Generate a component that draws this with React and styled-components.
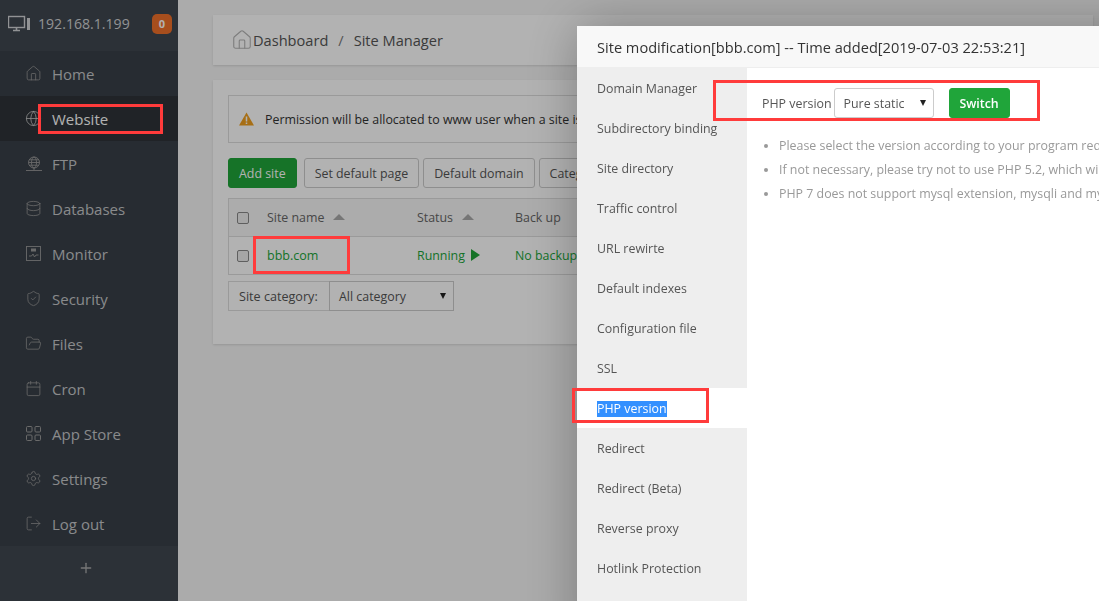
import React from "react";
import styled, { createGlobalStyle } from "styled-components";
import {
  Database,
  FolderOpen,
  Globe,
  House,
  Calendar,
  LogOut,
  Settings,
  ShieldCheck,
  Plus,
} from "lucide-react";

const GlobalStyle = createGlobalStyle`
  html, body {
    margin: 0;
    height: 100%;
    overflow: hidden;
    background: #f5f5f5;
    font-family: "Open Sans", "Liberation Sans", sans-serif;
  }
  * { box-sizing: border-box; }
`;

const Page = styled.div`
  display: flex;
  width: 1099px;
  height: 601px;
  overflow: hidden;
`;

const Sidebar = styled.aside`
  display: flex;
  flex-direction: column;
  flex: 0 0 178px;
  background: #394048;
`;

const ServerBar = styled.div`
  display: flex;
  align-items: center;
  height: 52px;
  padding: 0 6px 4px 8px;
  background: #404750;
  color: #d0d2d4;
  font-size: 14.1px;
  white-space: nowrap;
`;

const ServerIp = styled.span`
  margin-left: 6px;
  flex: 1;
`;

const Badge = styled.span`
  display: flex;
  align-items: center;
  justify-content: center;
  width: 20px;
  height: 20px;
  border-radius: 5px;
  background: #f0702a;
  color: #fff;
  font-size: 11px;
  font-weight: 700;
`;

const Nav = styled.nav`
  display: flex;
  flex-direction: column;
  flex: 1;
`;

const NavItem = styled.div`
  display: flex;
  align-items: center;
  gap: 11px;
  height: 45px;
  padding-left: 26px;
  background: ${(p) => (p.$active ? "#2e3338" : "transparent")};
  color: ${(p) => (p.$active ? "#fff" : "#c4c6c8")};
  font-size: 15px;
  font-weight: ${(p) => (p.$active ? 500 : 400)};
`;

const IconSlot = styled.span`
  display: flex;
  align-items: center;
  justify-content: center;
  flex: 0 0 15px;
  min-width: 0;
  width: 15px;
  height: 17px;
  color: ${(p) => (p.$active ? "#ccc" : "#999")};

  svg {
    flex: none;
  }
`;

const AddBar = styled.div`
  display: flex;
  align-items: center;
  justify-content: center;
  height: 55px;
  padding: 0 7px 12px 0;
  background: #404750;
  color: #aaa;
`;

const Main = styled.main`
  flex: 1;
  min-width: 0;
  padding: 15px 0 0 35px;
`;

const Card = styled.section`
  background: #fff;
  box-shadow: 0 1px 2px rgba(0, 0, 0, 0.12);
  width: 880px;
`;

const Crumbs = styled(Card)`
  display: flex;
  align-items: center;
  height: 50px;
  padding-left: 18px;
  margin-bottom: 15px;
  color: #555;
  font-size: 14.6px;
  white-space: nowrap;

  svg {
    color: #b4b4b4;
  }
`;

const CrumbSep = styled.span`
  margin: 0 10px;
  color: #777;
`;

const Panel = styled(Card)`
  height: 264px;
  padding: 15px;
`;

const Alert = styled.div`
  display: flex;
  align-items: center;
  gap: 11px;
  height: 48px;
  padding-left: 10px;
  border: 1px solid #ddd;
  color: #333;
  font-size: 12.4px;
  white-space: nowrap;
`;

const Toolbar = styled.div`
  display: flex;
  gap: 4px;
  margin-top: 15px;
`;

const Button = styled.button`
  height: 30px;
  padding: 0 10px;
  border: 1px solid ${(p) => (p.$primary ? "#20a53a" : "#ccc")};
  border-radius: 3px;
  background: ${(p) => (p.$primary ? "#20a53a" : "#fff")};
  color: ${(p) => (p.$primary ? "#fff" : "#555")};
  font-family: inherit;
  font-size: 12.4px;
  white-space: nowrap;
  margin-right: ${(p) => (p.$primary ? "3px" : "0")};
`;

const Table = styled.div`
  margin-top: 10px;
  border: 1px solid #ddd;
  font-size: 12.4px;
  color: #666;
`;

const Row = styled.div`
  display: grid;
  grid-template-columns: 38px 150px 98px 1fr;
  align-items: center;
  height: ${(p) => (p.$head ? "37px" : "38px")};
  background: ${(p) => (p.$head ? "#f6f6f6" : "#fff")};
  border-top: ${(p) => (p.$head ? "none" : "1px solid #ddd")};
  white-space: nowrap;
`;

const Check = styled.span`
  display: block;
  width: 12px;
  height: 12px;
  margin-left: 8px;
  border: 1px solid #888;
  border-radius: 2px;
  background: #eee;
`;

const Caret = styled.span`
  display: inline-block;
  width: 0;
  height: 0;
  margin-left: 9px;
  border-left: 6px solid transparent;
  border-right: 6px solid transparent;
  border-bottom: 6px solid #aaa;
  vertical-align: 2px;
`;

const GreenText = styled.span`
  color: #20a53a;
`;

const LinkText = styled.span`
  color: #20a53a;
  font-size: 12.5px;
`;

const PlayIcon = styled.span`
  display: inline-block;
  width: 0;
  height: 0;
  margin-left: 6px;
  border-top: 6px solid transparent;
  border-bottom: 6px solid transparent;
  border-left: 9px solid #20a53a;
  vertical-align: -1px;
`;

const Filter = styled.div`
  display: flex;
  width: 226px;
  height: 30px;
  margin-top: 6px;
  font-size: 12.6px;
  color: #555;
  white-space: nowrap;
`;

const FilterLabel = styled.span`
  display: flex;
  align-items: center;
  flex: 0 0 101px;
  padding-left: 10px;
  border: 1px solid #ddd;
  border-right: none;
`;

const FakeSelect = styled.div`
  position: relative;
  display: flex;
  align-items: center;
  width: ${(p) => p.$width};
  height: 30px;
  padding-left: 9px;
  border: 1px solid #ccc;
  border-radius: ${(p) => (p.$round ? "3px" : "0")};
  background: #fff;
  color: #555;
  font-size: 12.4px;

  &::after {
    content: "";
    position: absolute;
    right: 7px;
    top: 11px;
    border-left: 3.5px solid transparent;
    border-right: 3.5px solid transparent;
    border-top: 6px solid #222;
  }
`;

const Overlay = styled.div`
  position: fixed;
  inset: 0;
  background: rgba(0, 0, 0, 0.3);
`;

const Modal = styled.div`
  position: fixed;
  left: 577px;
  top: 26px;
  width: 760px;
  height: 620px;
  display: flex;
  flex-direction: column;
  background: #fff;
  box-shadow: 1px 1px 50px rgba(0, 0, 0, 0.3);
`;

const ModalTitle = styled.div`
  display: flex;
  align-items: center;
  flex: 0 0 42px;
  padding-left: 20px;
  background: #f8f8f8;
  border-bottom: 1px solid #eee;
  color: #333;
  font-size: 14.6px;
  white-space: nowrap;
`;

const ModalBody = styled.div`
  display: flex;
  flex: 1;
`;

const Tabs = styled.div`
  flex: 0 0 170px;
  background: #eee;
`;

const Tab = styled.div`
  display: flex;
  align-items: center;
  height: 40px;
  padding-left: 20px;
  background: ${(p) => (p.$active ? "#fff" : "transparent")};
  color: #555;
  font-size: 12.4px;
  white-space: nowrap;
`;

const Selected = styled.span`
  background: #3390ff;
  color: #fff;
  line-height: 16px;
  margin-top: 1px;
`;

const Content = styled.div`
  flex: 1;
  padding: 20px 15px;
`;

const VersionRow = styled.div`
  display: flex;
  align-items: center;
  height: 30px;
  color: #555;
  font-size: 12.4px;
  white-space: nowrap;
`;

const VersionLabel = styled.span`
  margin-right: 2px;
`;

const SwitchButton = styled(Button)`
  margin-left: 15px;
  padding: 0;
  width: 61px;
  font-weight: 600;
`;

const Tips = styled.ul`
  margin: 16px 0 0;
  padding-left: 17px;
  color: #999;
  font-size: 12.4px;
  white-space: nowrap;

  li {
    height: 24px;
    line-height: 24px;
  }
`;

const Mark = styled.div`
  position: fixed;
  left: ${(p) => p.$x}px;
  top: ${(p) => p.$y}px;
  width: ${(p) => p.$w}px;
  height: ${(p) => p.$h}px;
  border: 3px solid #ff3b3b;
`;

const ServerIcon = () => (
  <svg width="24" height="18" viewBox="0 0 24 18" fill="none" stroke="currentColor">
    <rect x="0.5" y="1.5" width="16" height="11" strokeWidth="1.4" />
    <path d="M5 15.5h7M8.5 13v2" strokeWidth="1.6" />
    <rect x="19" y="3" width="3" height="12" fill="currentColor" stroke="none" />
  </svg>
);

const NetworkIcon = () => (
  <svg width="16" height="16" viewBox="0 0 16 16" fill="none" stroke="currentColor" strokeWidth="0.9">
    <circle cx="8" cy="6.5" r="5.5" />
    <ellipse cx="8" cy="6.5" rx="2.5" ry="5.5" />
    <path d="M2.5 6.5h11M3.3 3.8h9.4M3.3 9.2h9.4M8 12v2M0 14.5h16" />
  </svg>
);

const ChartIcon = () => (
  <svg width="15" height="15" viewBox="0 0 15 15" fill="none" stroke="currentColor" strokeWidth="0.9">
    <rect x="0.5" y="0.5" width="14" height="14" />
    <path d="M3 10h2.5l1.5-2 1.5 3 1.5-2h2.5" />
    <rect x="5" y="2.5" width="5" height="3" fill="currentColor" stroke="none" />
  </svg>
);

const AppsIcon = () => (
  <svg width="15" height="15" viewBox="0 0 15 15" fill="none" stroke="currentColor" strokeWidth="1">
    <rect x="0.5" y="0.5" width="5.5" height="5.5" rx="1" />
    <rect x="9" y="0.5" width="5.5" height="5.5" rx="1" />
    <rect x="0.5" y="9" width="5.5" height="5.5" rx="1" />
    <rect x="9" y="9" width="5.5" height="5.5" rx="1" />
  </svg>
);

const WarnIcon = () => (
  <svg width="15" height="14" viewBox="0 0 15 14">
    <path d="M7.5 0.5 15 13.5H0Z" fill="#f0a020" />
    <path d="M7.5 4.5v5M7.5 10.5v1.6" stroke="#fff" strokeWidth="1.5" />
  </svg>
);

const navItems = [
  { label: "Home", icon: <House size={17} strokeWidth={1.1} /> },
  { label: "Website", icon: <Globe size={17} strokeWidth={1.1} />, active: true },
  { label: "FTP", icon: <NetworkIcon /> },
  { label: "Databases", icon: <Database size={17} strokeWidth={1.1} /> },
  { label: "Monitor", icon: <ChartIcon /> },
  { label: "Security", icon: <ShieldCheck size={17} strokeWidth={1.1} /> },
  { label: "Files", icon: <FolderOpen size={17} strokeWidth={1.1} /> },
  { label: "Cron", icon: <Calendar size={17} strokeWidth={1.1} /> },
  { label: "App Store", icon: <AppsIcon /> },
  { label: "Settings", icon: <Settings size={17} strokeWidth={1.1} /> },
  { label: "Log out", icon: <LogOut size={17} strokeWidth={1.1} /> },
];

const tabs = [
  "Domain Manager",
  "Subdirectory binding",
  "Site directory",
  "Traffic control",
  "URL rewirte",
  "Default indexes",
  "Configuration file",
  "SSL",
  "PHP version",
  "Redirect",
  "Redirect (Beta)",
  "Reverse proxy",
  "Hotlink Protection",
];

const marks = [
  { x: 38, y: 104, w: 125, h: 30 },
  { x: 253, y: 236, w: 97, h: 38 },
  { x: 713, y: 80, w: 327, h: 41 },
  { x: 572, y: 388, w: 137, h: 35 },
];

export default function App() {
  return (
    <>
      <GlobalStyle />
      <Page>
        <Sidebar>
          <ServerBar>
            <ServerIcon />
            <ServerIp>192.168.1.199</ServerIp>
            <Badge>0</Badge>
          </ServerBar>
          <Nav>
            {navItems.map((item) => (
              <NavItem key={item.label} $active={item.active}>
                <IconSlot $active={item.active}>{item.icon}</IconSlot>
                {item.label}
              </NavItem>
            ))}
          </Nav>
          <AddBar>
            <Plus size={16} strokeWidth={2} />
          </AddBar>
        </Sidebar>

        <Main>
          <Crumbs>
            <House size={22} strokeWidth={1.2} />
            Dashboard
            <CrumbSep>/</CrumbSep>
            Site Manager
          </Crumbs>
          <Panel>
            <Alert>
              <WarnIcon />
              Permission will be allocated to www user when a site is created
            </Alert>
            <Toolbar>
              <Button $primary>Add site</Button>
              <Button>Set default page</Button>
              <Button>Default domain</Button>
              <Button>Category manager</Button>
            </Toolbar>
            <Table>
              <Row $head>
                <Check />
                <span>
                  Site name
                  <Caret />
                </span>
                <span>
                  Status
                  <Caret />
                </span>
                <span>Back up</span>
              </Row>
              <Row>
                <Check />
                <LinkText>bbb.com</LinkText>
                <span>
                  <GreenText>Running</GreenText>
                  <PlayIcon />
                </span>
                <GreenText>No backup</GreenText>
              </Row>
            </Table>
            <Filter>
              <FilterLabel>Site category:</FilterLabel>
              <FakeSelect $width="125px">All category</FakeSelect>
            </Filter>
          </Panel>
        </Main>
      </Page>

      <Overlay />

      <Modal>
        <ModalTitle>Site modification[bbb.com] -- Time added[2019-07-03 22:53:21]</ModalTitle>
        <ModalBody>
          <Tabs>
            {tabs.map((tab) => (
              <Tab key={tab} $active={tab === "PHP version"}>
                {tab === "PHP version" ? <Selected>{tab}</Selected> : tab}
              </Tab>
            ))}
          </Tabs>
          <Content>
            <VersionRow>
              <VersionLabel>PHP version</VersionLabel>
              <FakeSelect $width="100px" $round>Pure static</FakeSelect>
              <SwitchButton $primary>Switch</SwitchButton>
            </VersionRow>
            <Tips>
              <li>Please select the version according to your program requirements</li>
              <li>If not necessary, please try not to use PHP 5.2, which will reduce your server security</li>
              <li>PHP 7 does not support mysql extension, mysqli and mysql-pdo are installed by default</li>
            </Tips>
          </Content>
        </ModalBody>
      </Modal>

      {marks.map((m) => (
        <Mark key={m.x} $x={m.x} $y={m.y} $w={m.w} $h={m.h} />
      ))}
    </>
  );
}
